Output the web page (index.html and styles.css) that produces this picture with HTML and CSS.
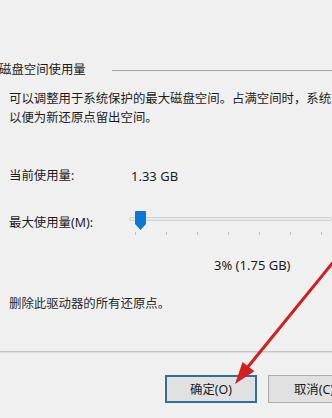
FILE: index.html
```html
<!DOCTYPE html>
<html lang="zh-CN">
<head>
<meta charset="utf-8">
<title>系统保护</title>
<link rel="stylesheet" href="styles.css">
</head>
<body>
<div class="dialog">
  <div class="group-head">
    <span class="group-title">磁盘空间使用量</span>
    <span class="group-line"></span>
  </div>
  <p class="desc">可以调整用于系统保护的最大磁盘空间。占满空间时，系统<br>以便为新还原点留出空间。</p>
  <div class="row usage">
    <span class="label">当前使用量:</span>
    <span class="value">1.33 GB</span>
  </div>
  <div class="row maxrow">
    <span class="label label-max">最大使用量(M):</span>
    <div class="slider">
      <div class="track"></div>
      <svg class="thumb" width="11" height="19" viewBox="0 0 11 19"><path d="M1 0H10Q11 0 11 1V13L5.5 19L0 13V1Q0 0 1 0Z" fill="#0a78d4"/></svg>
      <div class="ticks">
        <i></i><i></i><i></i><i></i><i></i><i></i><i></i>
      </div>
    </div>
  </div>
  <div class="pct">3% (1.75 GB)</div>
  <div class="delete">删除此驱动器的所有还原点。</div>
  <div class="separator"></div>
  <div class="buttons">
    <button class="btn btn-default">确定(O)</button>
    <button class="btn">取消(C)</button>
  </div>
  <svg class="arrow" width="332" height="418" viewBox="0 0 332 418">
    <line x1="343" y1="250" x2="247" y2="368" stroke="#d2201e" stroke-width="3" stroke-linecap="round"/>
    <polygon points="235,384 254.4,371.3 242.6,362.1" fill="#d2201e"/>
  </svg>
</div>
</body>
</html>
```

FILE: styles.css
```css
html, body {
  margin: 0;
  padding: 0;
}
body {
  background: #f0f0f0;
  font-family: "Noto Sans", "Noto Sans CJK SC", sans-serif;
  font-size: 12.4px;
  color: #1c1c1c;
}
.dialog {
  position: relative;
  width: 332px;
  height: 418px;
  overflow: hidden;
}
.group-head {
  display: flex;
  align-items: center;
  height: 20px;
  margin-top: 60px;
  margin-left: -1px;
}
.group-title {
  line-height: 20px;
  white-space: nowrap;
}
.group-line {
  flex: 1;
  height: 1px;
  background: #a6a6a6;
  margin-left: 26px;
}
.desc {
  margin: 9px 0 0 9px;
  line-height: 19px;
  white-space: nowrap;
}
.row {
  display: flex;
  align-items: flex-start;
  padding-left: 9px;
  line-height: 20px;
}
.usage {
  margin-top: 39px;
}
.label {
  width: 122px;
  white-space: nowrap;
}
.label-max {
  width: 120px;
}
.value {
  font-size: 13px;
}
.maxrow {
  margin-top: 27px;
}
.slider {
  position: relative;
  flex: 1;
  height: 22px;
}
.track {
  margin-top: 4px;
  height: 2px;
  border: 1px solid #ced4d4;
  border-radius: 2px;
  background: #e8ebeb;
}
.thumb {
  position: absolute;
  left: 6px;
  top: -2px;
}
.ticks {
  display: flex;
  gap: 30px;
  margin-top: 11px;
  margin-left: 6px;
}
.ticks i {
  display: block;
  width: 1px;
  height: 3px;
  background: #bdbdbd;
}
.pct {
  margin-top: 20px;
  margin-left: 214px;
  line-height: 20px;
  font-size: 13px;
  white-space: nowrap;
}
.delete {
  margin-top: 19px;
  padding-left: 9px;
  line-height: 20px;
  color: #2a2a2a;
}
.separator {
  margin-top: 37px;
  height: 1px;
  background: #c4c4c4;
  border-bottom: 1px solid #dddddd;
}
.buttons {
  display: flex;
  gap: 11px;
  margin-top: 22px;
  padding-left: 165px;
}
.btn {
  flex: none;
  width: 92px;
  height: 28px;
  padding: 0;
  border: 1px solid #adadad;
  background: #e1e1e1;
  font-family: inherit;
  font-size: 12.4px;
  color: #1c1c1c;
}
.btn-default {
  border: 2px solid #346f92;
  box-shadow: inset 0 0 0 1px #d4e6f1;
}
.arrow {
  position: absolute;
  left: 0;
  top: 0;
  pointer-events: none;
}
```
